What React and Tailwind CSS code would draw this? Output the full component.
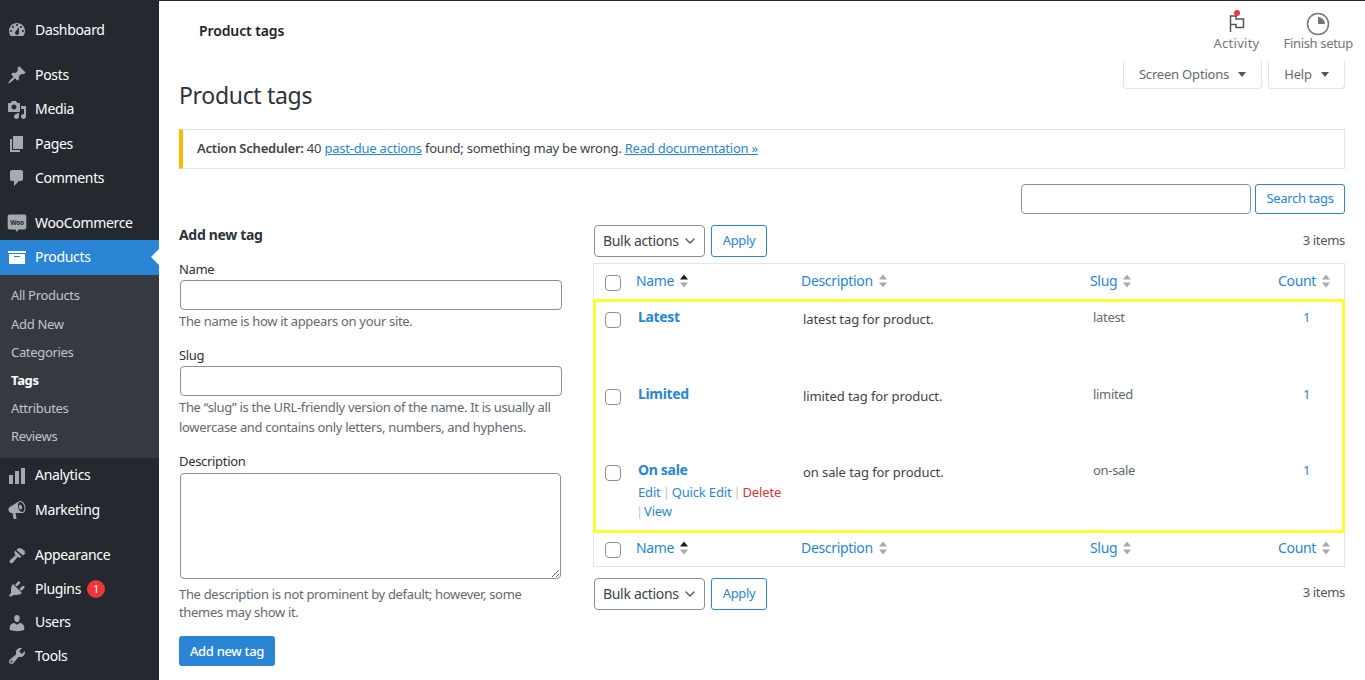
import { ChevronDown } from 'lucide-react';

const ICONS = {
  dashboard: 'M3.76 16h12.48c1.1-1.37 1.76-3.11 1.76-5 0-4.42-3.58-8-8-8s-8 3.58-8 8c0 1.89.66 3.63 1.76 5zM10 4c.55 0 1 .45 1 1s-.45 1-1 1-1-.45-1-1 .45-1 1-1zM6 6c.55 0 1 .45 1 1s-.45 1-1 1-1-.45-1-1 .45-1 1-1zm8 0c.55 0 1 .45 1 1s-.45 1-1 1-1-.45-1-1 .45-1 1-1zm-5.37 5.55L12 7v6c0 1.1-.9 2-2 2s-2-.9-2-2c0-.57.24-1.08.63-1.45zM4 10c.55 0 1 .45 1 1s-.45 1-1 1-1-.45-1-1 .45-1 1-1zm12 0c.55 0 1 .45 1 1s-.45 1-1 1-1-.45-1-1 .45-1 1-1z',
  posts: 'M10.44 3.02l1.82-1.82 6.36 6.35-1.83 1.82c-1.05-.68-2.48-.57-3.41.36l-.75.75c-.92.93-1.04 2.35-.35 3.41l-1.83 1.82-2.41-2.41-2.8 2.79c-.42.42-3.38 2.71-3.8 2.29s1.86-3.39 2.28-3.81l2.79-2.79L4.1 9.36l1.83-1.82c1.05.69 2.48.57 3.4-.36l.75-.75c.93-.92 1.05-2.35.36-3.41z',
  media: 'M13 11V4c0-.55-.45-1-1-1h-1.67L9 1H5L3.67 3H2c-.55 0-1 .45-1 1v7c0 .55.45 1 1 1h10c.55 0 1-.45 1-1zM7 4.5c1.38 0 2.5 1.12 2.5 2.5S8.38 9.5 7 9.5 4.5 8.38 4.5 7 5.62 4.5 7 4.5zM14 6h5v10.5c0 1.38-1.12 2.5-2.5 2.5S14 17.88 14 16.5s1.12-2.5 2.5-2.5c.17 0 .34.02.5.05V9h-3V6zm-4 8.05V13h2v3.5c0 1.38-1.12 2.5-2.5 2.5S7 17.88 7 16.5 8.12 14 9.5 14c.17 0 .34.02.5.05z',
  pages: 'M6 15V2h10v13H6zm-1 1h8v2H3V5h2v11z',
  comments: 'M5 2h9c1.1 0 2 .9 2 2v7c0 1.1-.9 2-2 2h-2l-5 5v-5H5c-1.1 0-2-.9-2-2V4c0-1.1.9-2 2-2z',
  products: 'M19 4v2H1V4h18zM2 7h16v10H2V7zm11 3V9H7v1h6z',
  analytics: 'M2 9h4v9H2zM8 5h4v13H8zM14 2h4v16h-4z',
  marketing: 'M18.15 5.94c.46 1.62.38 3.22-.02 4.48-.42 1.28-1.26 2.18-2.3 2.48-.16.06-.26.06-.4.06-.06.02-.12.02-.18.02-.06.02-.14.02-.22.02H8.4l1.2 5.5c.02.14-.06.26-.14.34-.08.1-.24.16-.34.16H6.95c-.1 0-.26-.06-.34-.16-.08-.08-.16-.2-.14-.34l-1-5.5H4.25l-.02-.02c-.5.06-1.08-.18-1.54-.62s-.88-1.08-1.06-1.88c-.24-.8-.2-1.56-.02-2.2.18-.62.58-1.08 1.06-1.3l.02-.02 9-5.4c.1-.06.18-.1.24-.16.06-.04.14-.08.24-.12.16-.08.28-.12.5-.18 1.04-.3 2.24.1 3.22.98.98.86 1.8 2.2 2.26 3.86zm-2.58 5.98h-.02c.4-.1.74-.34 1.04-.7.58-.7.86-1.76.86-3.04-.02-.64-.1-1.3-.28-1.98-.34-1.36-1.02-2.5-1.78-3.24s-1.68-1.1-2.46-.88c-.82.22-1.4.96-1.7 2-.32 1.04-.28 2.36.06 3.72.38 1.36 1 2.5 1.8 3.24.78.74 1.62 1.1 2.48.88zm-2.54-7.08c.22-.04.42-.02.62.04.38.16.76.48 1.02 1s.42 1.2.42 1.78c0 .3-.04.56-.12.8-.18.48-.44.84-.86.94-.34.1-.8-.06-1.14-.34-.36-.3-.68-.7-.9-1.28-.24-.6-.26-1.18-.2-1.68.04-.26.14-.48.28-.66.14-.2.42-.44.88-.6z',
  appearance: 'M11.500 3l1.300.6 1.400-.6.4 1.200 1.600-.2.1 1.500 1.700.3-.5 1.500 1 1-2.500 2.200-6.500-5.500zM8 5.500l6.500 6-1.700 1.500-2-1.200-4.800 5.700c-.8.9-2.100 1-2.900.2s-.7-2 .1-2.800l5.400-4.700-1.200-2.100z',
  plugins: 'M13.11 4.36L9.87 7.6 8 5.73l3.24-3.24c.35-.34 1.05-.2 1.56.32.52.51.66 1.21.31 1.55zm-8 1.77l.91-1.12 9.01 9.01-1.19.84c-.71.71-2.63 1.16-3.82 1.16H6.14L4.9 17.26c-.59.59-1.54.59-2.12 0-.59-.58-.59-1.53 0-2.12l1.24-1.24v-3.88c0-1.13.4-3.19 1.09-3.89zm7.26 3.97l3.24-3.24c.34-.35 1.04-.21 1.55.31.52.51.66 1.21.31 1.55l-3.24 3.25z',
  users: 'M10 9.25c-2.27 0-2.73-3.44-2.73-3.44C7 4.02 7.82 2 9.97 2c2.16 0 2.98 2.02 2.71 3.81 0 0-.41 3.44-2.68 3.44zm0 2.57L12.72 10c2.39 0 4.52 2.33 4.52 4.53v2.49s-3.65 1.13-7.24 1.13c-3.65 0-7.24-1.13-7.24-1.13v-2.49c0-2.25 1.94-4.48 4.47-4.48z',
  tools: 'M16.68 9.77c-1.34 1.34-3.3 1.67-4.95.99l-5.41 6.52c-.99.99-2.59.99-3.58 0s-.99-2.59 0-3.57l6.52-5.42c-.68-1.65-.35-3.61.99-4.95 1.28-1.28 3.12-1.62 4.72-1.06l-2.89 2.89 2.82 2.82 2.86-2.87c.53 1.58.18 3.39-1.08 4.65zM3.81 16.21c.4.39 1.04.39 1.43 0 .4-.4.4-1.04 0-1.43-.39-.4-1.03-.4-1.43 0-.39.39-.39 1.03 0 1.43z',
};

const DashIcon = ({ name, active }) => (
  <svg viewBox="0 0 20 20" className={`w-5 h-5 ${active ? 'fill-white' : 'fill-[#a7aaad]'}`}>
    <path d={ICONS[name]} />
  </svg>
);

const WooIcon = () => (
  <svg viewBox="0 0 20 20" className="w-5 h-5">
    <path d="M2.5 1.5h15a1.8 1.8 0 0 1 1.8 1.8v11.4a1.8 1.8 0 0 1-1.8 1.8h-6L10 19l-1.5-2.5h-6A1.8 1.8 0 0 1 .7 14.700V3.300A1.8 1.8 0 0 1 2.500 1.500z" className="fill-[#a7aaad]" />
    <text x="10" y="11.500" textAnchor="middle" className="fill-[#23282d] text-[6.500px] font-bold">Woo</text>
  </svg>
);

const MenuItem = ({ icon, label, active, badge, className = 'h-[34.3px]' }) => (
  <div className={`flex items-center relative ${className} ${active ? 'bg-[#2a86d5]' : ''}`}>
    <div className="w-[35px] pl-[7px] shrink-0">
      {icon === 'woo' ? <WooIcon /> : <DashIcon name={icon} active={active} />}
    </div>
    <span className="text-[14px] text-white pb-[2px]">{label}</span>
    {badge && (
      <span className="ml-[6px] w-[18px] h-[18px] rounded-full bg-[#f0353b] text-white text-[11px] flex items-center justify-center">
        {badge}
      </span>
    )}
    {active && (
      <span className="absolute right-0 top-[9px] border-y-[8px] border-r-[8px] border-y-transparent border-r-white" />
    )}
  </div>
);

const SubMenu = () => (
  <div className="bg-[#343a40] h-[183.500px] pt-[8px]">
    {['All Products', 'Add New', 'Categories', 'Tags', 'Attributes', 'Reviews'].map((item) => (
      <div
        key={item}
        className={`h-[28.2px] pl-[11px] flex items-center text-[13px] pb-[1px] ${item === 'Tags' ? 'text-white font-bold' : 'text-[#c3c4c7]'}`}
      >
        {item}
      </div>
    ))}
  </div>
);

const Sidebar = () => (
  <aside className="w-[159px] shrink-0 bg-[#23292e] pt-[13px]">
    <MenuItem icon="dashboard" label="Dashboard" />
    <div className="h-[11px]" />
    <MenuItem icon="posts" label="Posts" />
    <MenuItem icon="media" label="Media" />
    <MenuItem icon="pages" label="Pages" />
    <MenuItem icon="comments" label="Comments" />
    <div className="h-[10.500px]" />
    <MenuItem icon="woo" label="WooCommerce" />
    <MenuItem icon="products" label="Products" active />
    <SubMenu />
    <MenuItem icon="analytics" label="Analytics" className="h-[35px]" />
    <MenuItem icon="marketing" label="Marketing" />
    <div className="h-[10.500px]" />
    <MenuItem icon="appearance" label="Appearance" />
    <MenuItem icon="plugins" label="Plugins" badge="1" className="h-[33.800px]" />
    <MenuItem icon="users" label="Users" className="h-[33.500px]" />
    <MenuItem icon="tools" label="Tools" className="h-[33.500px]" />
  </aside>
);

const Header = () => (
  <header className="h-[61px] border-t border-[#23282d] flex justify-between pl-[40px] pr-[12px]">
    <h2 className="pt-[20px] text-[14px] leading-[20px] font-semibold tracking-[-0.008em] text-[#1e1e1e]">Product tags</h2>
    <div className="flex gap-[24px] pt-[11px] text-[13px] leading-[18px] text-[#757575]">
      <div className="flex flex-col items-center relative tracking-[0.02em]">
        <svg viewBox="0 0 24 24" className="w-6 h-6 fill-none stroke-[#50575e] stroke-[1.500px]">
          <path d="M5.500 20V4h5.500v3h7.500v8.500H11v-3H5.500" />
        </svg>
        <span className="absolute -top-[2px] left-[20px] w-[6px] h-[6px] rounded-full bg-[#f0353b]" />
        <span className="-mt-[2px]">Activity</span>
      </div>
      <div className="flex flex-col items-center tracking-[-0.025em]">
        <svg viewBox="0 0 24 24" className="w-6 h-6">
          <circle cx="12" cy="12" r="10.500" className="fill-none stroke-[#757575] stroke-[1.500px]" />
          <path d="M12 5a7 7 0 0 1 7 7h-7z" className="fill-[#757575]" />
        </svg>
        <span className="-mt-[2px]">Finish setup</span>
      </div>
    </div>
  </header>
);

const ScreenTab = ({ label, className }) => (
  <div className={`h-[28px] border border-t-0 border-[#e2e4e7] rounded-b-[4px] flex items-center justify-center gap-[8px] text-[13px] tracking-[-0.015em] text-[#646970] ${className}`}>
    {label}
    <span className="border-x-[4px] border-t-[5px] border-x-transparent border-t-[#50575e] ml-[1px]" />
  </div>
);

const Field = ({ label, help, textarea }) => (
  <div>
    <label className={`block text-[13px] leading-[18px] text-[#2c3338] ${textarea ? 'mb-[3px]' : 'mb-[2px]'}`}>{label}</label>
    {textarea ? (
      <textarea className="block w-[381px] h-[106px] ml-[1px] border border-[#8c8f94] rounded-[4px] bg-white" />
    ) : (
      <input className="block w-[382px] h-[30px] ml-[1px] border border-[#8c8f94] rounded-[4px] bg-white" />
    )}
    <p className={`text-[13px] text-[#646970] mt-[1px] ${textarea ? 'leading-[18px] pt-[5px]' : 'leading-[20px]'}`}>{help}</p>
  </div>
);

const AddTagForm = () => (
  <section className="w-[384px] shrink-0">
    <h2 className="text-[14px] leading-[20px] font-bold text-[#2c3338] mb-[15px]">Add new tag</h2>
    <Field label="Name" help="The name is how it appears on your site." />
    <div className="h-[15px]" />
    <Field label="Slug" help="The “slug” is the URL-friendly version of the name. It is usually all lowercase and contains only letters, numbers, and hyphens." />
    <div className="h-[15px]" />
    <Field label="Description" textarea help="The description is not prominent by default; however, some themes may show it." />
    <button className="mt-[15px] w-[96px] h-[30px] pt-[1px] rounded-[3px] bg-[#2a86d5] text-white text-[13px] font-medium">Add new tag</button>
  </section>
);

const Checkbox = () => (
  <span className="block w-[16px] h-[16px] border border-[#8c8f94] rounded-[4px] bg-white" />
);

const SortArrows = ({ sorted }) => (
  <svg viewBox="0 0 10 16" className="w-[10px] h-[16px] inline-block">
    <path d="M5 1.500L9 6.500H1z" className={sorted ? 'fill-[#1e1e1e]' : 'fill-[#a7aaad]'} />
    <path d="M5 14.500L9 9.500H1z" className="fill-[#a7aaad]" />
  </svg>
);

const HeadCell = ({ label, sorted }) => (
  <span className="inline-flex items-center gap-[5px] text-[14px] text-[#2a86d5] pb-[3px]">
    {label}
    <SortArrows sorted={sorted} />
  </span>
);

const HeadRow = ({ className }) => (
  <div className={`grid grid-cols-[42px_165px_289px_188px_1fr] items-center border-x border-[#e2e4e7] ${className}`}>
    <div className="pl-[11px] pt-[2px]"><Checkbox /></div>
    <HeadCell label="Name" sorted />
    <HeadCell label="Description" />
    <HeadCell label="Slug" />
    <HeadCell label="Count" />
  </div>
);

const RowActions = () => (
  <div className="mt-[3px] w-[155px] flex flex-wrap text-[13px] leading-[19px] tracking-[-0.012em] text-[#c3c4c7]">
    <a className="text-[#2a86d5]">Edit</a>
    <span className="mx-[2px]">|</span>
    <a className="text-[#2a86d5] whitespace-nowrap">Quick Edit</a>
    <span className="mx-[2px]">|</span>
    <a className="text-[#d63638]">Delete</a>
    <span className="whitespace-nowrap -ml-[2px]">
      <span className="mr-[1px]">|</span>
      <a className="text-[#2a86d5]">View</a>
    </span>
  </div>
);

const TagRow = ({ name, description, slug, actions, className }) => (
  <div className={`grid grid-cols-[42px_165px_290px_210px_1fr] ${className}`}>
    <div className="pl-[9px] pt-[9px]"><Checkbox /></div>
    <div className="pt-[4px]">
      <a className="block text-[14px] leading-[20px] font-bold text-[#2a86d5]">{name}</a>
      {actions && <RowActions />}
    </div>
    <div className="pt-[6px] text-[13px] leading-[20px] tracking-[-0.007em] text-[#3c434a]">{description}</div>
    <div className="pt-[4px] text-[13px] leading-[20px] text-[#646970]">{slug}</div>
    <div className="pt-[4px] text-[13px] leading-[20px] text-[#2a86d5]">1</div>
  </div>
);

const TableNav = ({ countClass = '' }) => (
  <div className="flex items-center gap-[6px]">
    <div className="ml-[1px] w-[111px] h-[32px] border border-[#8c8f94] rounded-[4px] flex items-center justify-between pl-[8px] pr-[6px] text-[14px] whitespace-nowrap text-[#3c434a]">
      <span className="pb-[2px]">Bulk actions</span>
      <ChevronDown size={16} className="text-[#50575e]" />
    </div>
    <button className="w-[56px] h-[32px] border border-[#2a86d5] rounded-[3px] text-[13px] text-[#2a86d5]">Apply</button>
    <span className={`ml-auto text-[13px] text-[#50575e] ${countClass}`}>3 items</span>
  </div>
);

const TagsTable = () => (
  <section className="w-[752px] shrink-0">
    <TableNav />
    <HeadRow className="mt-[6px] h-[37px] border-t" />
    <div className="relative -my-[1px] h-[234px] pt-[1px] border-[3px] border-[#ffff33] flex flex-col">
      <TagRow className="h-[77px]" name="Latest" description="latest tag for product." slug="latest" />
      <TagRow className="h-[76px]" name="Limited" description="limited tag for product." slug="limited" />
      <TagRow className="flex-1" name="On sale" description="on sale tag for product." slug="on-sale" actions />
    </div>
    <HeadRow className="h-[35px] border-b" />
    <div className="mt-[11px]"><TableNav countClass="pb-[2px]" /></div>
  </section>
);

const App = () => (
  <div className="h-[680px] w-[1365px] overflow-hidden flex bg-white tracking-[-0.02em] font-['Noto_Sans',sans-serif]">
    <Sidebar />
    <main className="flex-1 min-w-0">
      <Header />
      <div className="pl-[20px] pr-[20px]">
        <div className="flex justify-between items-start">
          <h1 className="mt-[19px] text-[23px] leading-[30px] text-[#2c3338]">Product tags</h1>
          <div className="flex gap-[6px]">
            <ScreenTab label="Screen Options" className="w-[139px]" />
            <ScreenTab label="Help" className="w-[77px]" />
          </div>
        </div>
        <div className="mt-[19px] h-[40px] border border-[#e2e4e7] border-l-[4px] border-l-[#ffb900] flex items-center pl-[14px] text-[13px] tracking-[-0.017em] text-[#3c434a]">
          <p>
            <b className="font-semibold">Action Scheduler:</b> 40{' '}
            <a className="text-[#2a86d5] underline">past-due actions</a> found; something may be wrong.{' '}
            <a className="text-[#2a86d5] underline">Read documentation »</a>
          </p>
        </div>
        <div className="mt-[15px] flex justify-end gap-[4px]">
          <input className="w-[230px] h-[30px] border border-[#8c8f94] rounded-[4px] bg-white" />
          <button className="w-[90px] h-[30px] border border-[#2a86d5] rounded-[3px] text-[13px] text-[#2a86d5]">Search tags</button>
        </div>
        <div className="mt-[11px] flex justify-between">
          <AddTagForm />
          <TagsTable />
        </div>
      </div>
    </main>
  </div>
);

export default App;
